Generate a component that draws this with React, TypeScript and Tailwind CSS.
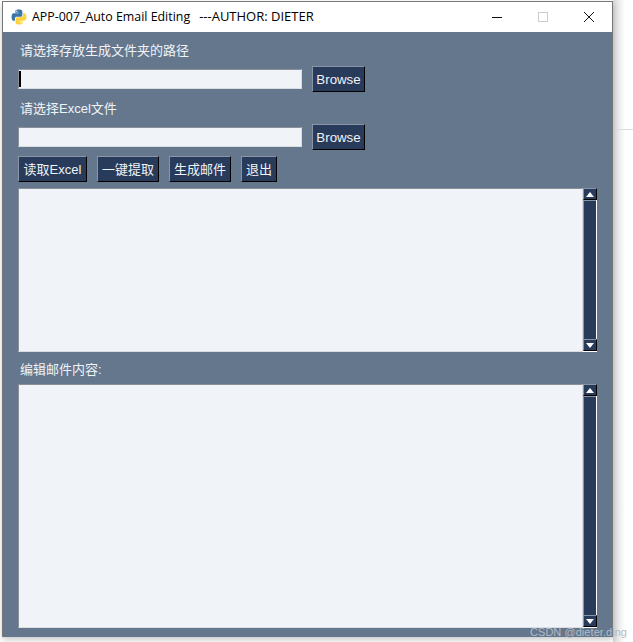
import React from 'react';

const cjk = '"Liberation Sans", "Noto Sans CJK SC", sans-serif';

function PythonLogo() {
  return (
    <svg width="16" height="16" viewBox="0 0 110 110" className="shrink-0">
      <path
        fill="#3a76a8"
        d="M54 3C29 3 30 14 30 14v12h25v4H20S4 28 4 55s14 26 14 26h9V68s-1-14 14-14h24s13 0 13-13V17S80 3 54 3zM40 11a4.500 4.500 0 1 1 0 9 4.500 4.500 0 0 1 0-9z"
      />
      <path
        fill="#fdd23c"
        d="M56 107c25 0 24-11 24-11V84H55v-4h35s16 2 16-25-14-26-14-26h-9v13s1 14-14 14H45s-13 0-13 13v24s-2 14 24 14zm14-8a4.500 4.500 0 1 1 0-9 4.500 4.500 0 0 1 0 9z"
      />
    </svg>
  );
}

function TitleBar() {
  return (
    <div className="flex h-[30px] items-center bg-white pl-[8px]">
      <PythonLogo />
      <div
        className="ml-[5px] flex items-baseline whitespace-pre text-black"
        style={{ fontFamily: '"Open Sans", sans-serif' }}
      >
        <span className="text-[12.400px]">APP-007_Auto Email Editing</span>
        <span className="ml-[9px] text-[13px]">---AUTHOR: DIETER</span>
      </div>
      <div className="ml-auto flex items-center">
        <svg width="12" height="12" viewBox="0 0 12 12" className="mr-[34px]">
          <path d="M1 6.500h10" stroke="#111" strokeWidth="1" />
        </svg>
        <svg width="12" height="12" viewBox="0 0 12 12" className="mr-[34px]">
          <rect x="1.500" y="1.500" width="9" height="9" fill="none" stroke="#ccc" strokeWidth="1" />
        </svg>
        <svg width="12" height="12" viewBox="0 0 12 12" className="mr-[17px]">
          <path d="M1 1l10 10M11 1L1 11" stroke="#111" strokeWidth="1" />
        </svg>
      </div>
    </div>
  );
}

function TkButton({ children, className = '' }: { children: React.ReactNode; className?: string }) {
  return (
    <button
      className={`flex h-[26px] items-center justify-center border border-t-[#8a94a6] border-l-[#8a94a6] border-r-black border-b-black bg-[#283b5b] pt-[2px] text-[#f0f3f8] ${className}`}
    >
      {children}
    </button>
  );
}

function Entry({ cursor }: { cursor?: boolean }) {
  return (
    <div className="flex h-[20px] w-[284px] items-center border border-t-[#8a8f98] border-l-[#8a8f98] border-r-[#d9dce1] border-b-[#d9dce1] bg-[#f0f3f8]">
      {cursor && <div className="h-[16px] w-[2px] bg-black" />}
    </div>
  );
}

function ScrollArrow({ down }: { down?: boolean }) {
  return (
    <div className="flex h-[12px] w-[14px] shrink-0 items-center justify-center border border-t-[#8a94a6] border-l-[#8a94a6] border-r-black border-b-black bg-[#283b5b]">
      <svg width="8" height="5" viewBox="0 0 8 5">
        <path d={down ? 'M0 0h8L4 5z' : 'M4 0l4 5H0z'} fill="#fff" />
      </svg>
    </div>
  );
}

function TextBox({ height }: { height: string }) {
  return (
    <div className={`flex w-[579px] ${height}`}>
      <div className="flex-1 border border-t-[#8a8f98] border-l-[#8a8f98] border-r-[#d9dce1] border-b-[#d9dce1] bg-[#f0f3f8]" />
      <div className="flex w-[14px] flex-col border-r border-b border-white bg-black">
        <ScrollArrow />
        <div className="flex-1 border-t border-l border-t-[#8a94a6] border-l-[#8a94a6] bg-[#283b5b]" />
        <ScrollArrow down />
      </div>
    </div>
  );
}

function Label({ children, className = '' }: { children: React.ReactNode; className?: string }) {
  return <div className={`h-[18px] pl-[2px] text-[13px] leading-[20px] text-[#f0f3f8] ${className}`}>{children}</div>;
}

export default function App() {
  return (
    <div className="relative h-[642px] w-[633px] overflow-hidden bg-white" style={{ fontFamily: cjk }}>
      {/* page behind the window */}
      <div className="absolute left-[613px] top-0 h-full w-[12px] bg-gradient-to-r from-[#d8d8d8] to-white" />
      <div className="absolute left-[612px] right-0 top-[129px] h-px bg-[#dddddd]" />

      <div className="relative ml-[2px] mt-px h-[636px] w-[611px] border-x border-t border-[#777777] bg-[#64778d] shadow-[0_3px_6px_rgba(0,0,0,0.2)]">
        <TitleBar />
        <div className="flex flex-col pl-[15px] pt-[9px]">
          <Label>请选择存放生成文件夹的路径</Label>
          <div className="mt-[7px] flex items-center gap-[10px]">
            <Entry cursor />
            <TkButton className="w-[53px] text-[13.300px]">Browse</TkButton>
          </div>
          <Label className="mt-[7px]">请选择Excel文件</Label>
          <div className="mt-[7px] flex items-center gap-[10px]">
            <Entry />
            <TkButton className="w-[53px] text-[13.300px]">Browse</TkButton>
          </div>
          <div className="mt-[6px] flex gap-[10px] text-[13px]">
            <TkButton className="w-[69px]">读取Excel</TkButton>
            <TkButton className="w-[62px]">一键提取</TkButton>
            <TkButton className="w-[62px]">生成邮件</TkButton>
            <TkButton className="w-[36px]">退出</TkButton>
          </div>
          <div className="mt-[6px]">
            <TextBox height="h-[164px]" />
          </div>
          <Label className="mt-[8px]">编辑邮件内容:</Label>
          <div className="mt-[6px]">
            <TextBox height="h-[244px]" />
          </div>
        </div>
      </div>

      <span className="absolute left-[530px] top-[624px] whitespace-nowrap text-[11px] tracking-[0.05px] text-[#b4bbc5]">
        CSDN @dieter.ding
      </span>
    </div>
  );
}
